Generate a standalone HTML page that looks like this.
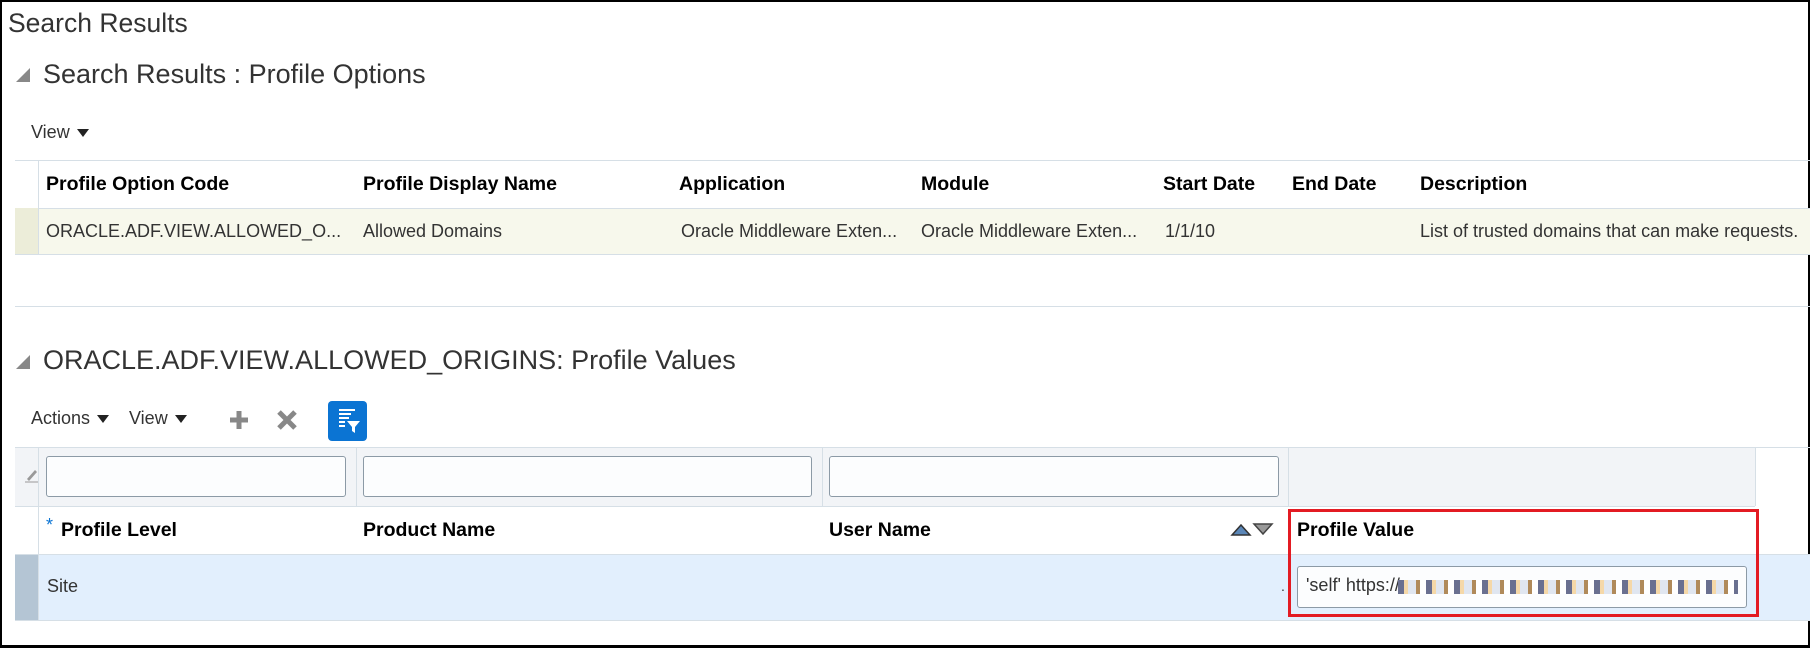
<!DOCTYPE html>
<html><head><style>
*{box-sizing:border-box;margin:0;padding:0}
body{width:1810px;height:648px;background:#fff;font-family:"Liberation Sans",Arial,sans-serif;color:#333;position:relative;overflow:hidden}
.frame{position:absolute;left:0;top:0;width:1810px;height:648px;border:2px solid #000;border-bottom-width:3px}
.a{position:absolute;white-space:nowrap}
.hl{position:absolute;height:1px;background:#d6dfe6}
.vl{position:absolute;width:1px;background:#d6dfe6}
.th{font-weight:bold;font-size:19.5px;color:#000}
.td{font-size:18px;color:#333}
.tri{width:0;height:0;border-left:14px solid transparent;border-bottom:14px solid #888;}
.inp{position:absolute;border:1px solid #8c9aa6;border-radius:3px;background:#fcfdfe}
.caret{display:inline-block;width:0;height:0;border-left:6px solid transparent;border-right:6px solid transparent;border-top:8px solid #222;margin-left:7px;vertical-align:middle}
</style></head><body>
<div class="frame"></div>
<div class="a" style="left:8px;top:8px;font-size:26.5px;color:#333">Search Results</div>
<div class="a tri" style="left:16px;top:68px"></div>
<div class="a" style="left:43px;top:59px;font-size:27px;color:#333">Search Results : Profile Options</div>
<div class="a" style="left:31px;top:122px;font-size:18px;color:#333">View<span class="caret"></span></div>

<div class="hl" style="left:15px;top:160px;width:1795px"></div>
<div class="a" style="left:15px;top:208px;width:1795px;height:46px;background:#f7f8ec"></div>
<div class="hl" style="left:15px;top:208px;width:1795px"></div>
<div class="hl" style="left:15px;top:254px;width:1795px"></div>
<div class="a" style="left:15px;top:208px;width:23px;height:46px;background:#ecedd9"></div>
<div class="vl" style="left:38px;top:160px;height:94px"></div>
<div class="a th" style="left:46px;top:173px">Profile Option Code</div>
<div class="a th" style="left:363px;top:173px">Profile Display Name</div>
<div class="a th" style="left:679px;top:173px">Application</div>
<div class="a th" style="left:921px;top:173px">Module</div>
<div class="a th" style="left:1163px;top:173px">Start Date</div>
<div class="a th" style="left:1292px;top:173px">End Date</div>
<div class="a th" style="left:1420px;top:173px">Description</div>
<div class="a td" style="left:46px;top:221px">ORACLE.ADF.VIEW.ALLOWED_O...</div>
<div class="a td" style="left:363px;top:221px">Allowed Domains</div>
<div class="a td" style="left:681px;top:221px">Oracle Middleware Exten...</div>
<div class="a td" style="left:921px;top:221px">Oracle Middleware Exten...</div>
<div class="a td" style="left:1165px;top:221px">1/1/10</div>
<div class="a td" style="left:1420px;top:221px">List of trusted domains that can make requests.</div>

<div class="hl" style="left:15px;top:306px;width:1795px"></div>
<div class="a tri" style="left:16px;top:355px"></div>
<div class="a" style="left:43px;top:345px;font-size:27px;color:#333">ORACLE.ADF.VIEW.ALLOWED_ORIGINS: Profile Values</div>

<div class="a" style="left:31px;top:408px;font-size:18px;color:#333">Actions<span class="caret"></span></div>
<div class="a" style="left:129px;top:408px;font-size:18px;color:#333">View<span class="caret"></span></div>
<svg class="a" style="left:228px;top:409px" width="22" height="22"><path d="M11 2v18M2 11h18" stroke="#888" stroke-width="5"/></svg>
<svg class="a" style="left:276px;top:409px" width="22" height="22"><path d="M3 3L19 19M19 3L3 19" stroke="#888" stroke-width="5"/></svg>
<div class="a" style="left:328px;top:401px;width:39px;height:40px;background:#0b74d3;border-radius:4px"></div>
<svg class="a" style="left:328px;top:401px" width="39" height="40"><path d="M11 9h16M11 13h12M11 17h10M11 21h6M11 25h6" stroke="#fff" stroke-width="2"/><path d="M19 20h13l-5 6v6l-3-2v-4z" fill="#fff"/></svg>

<div class="a" style="left:15px;top:447px;width:1740px;height:59px;background:#f2f4f7"></div>
<div class="hl" style="left:15px;top:447px;width:1795px"></div>
<div class="hl" style="left:15px;top:506px;width:1740px"></div>
<div class="vl" style="left:1755px;top:447px;height:59px"></div>
<div class="a" style="left:15px;top:554px;width:1795px;height:66px;background:#e2effd"></div>
<div class="a" style="left:15px;top:554px;width:23px;height:66px;background:#b4c5d4"></div>
<div class="hl" style="left:15px;top:554px;width:1795px"></div>
<div class="hl" style="left:15px;top:620px;width:1795px"></div>
<div class="vl" style="left:38px;top:447px;height:173px"></div>
<div class="vl" style="left:356px;top:447px;height:59px"></div>
<div class="vl" style="left:822px;top:447px;height:59px"></div>
<div class="vl" style="left:1288px;top:447px;height:59px"></div>
<svg class="a" style="left:24px;top:466px" width="14" height="18"><path d="M3 13L11 4l2 2-8 9z" fill="#999"/><path d="M1 16h13" stroke="#999"/></svg>
<div class="inp" style="left:46px;top:456px;width:300px;height:41px"></div>
<div class="inp" style="left:363px;top:456px;width:449px;height:41px"></div>
<div class="inp" style="left:829px;top:456px;width:450px;height:41px"></div>
<div class="a" style="left:46px;top:515px;font-size:18px;color:#0b74d3">*</div>
<div class="a th" style="left:61px;top:519px">Profile Level</div>
<div class="a th" style="left:363px;top:519px">Product Name</div>
<div class="a th" style="left:829px;top:519px">User Name</div>
<svg class="a" style="left:1230px;top:521px" width="46" height="16"><path d="M2 14L11 4l9 10z" fill="#5b87b8" stroke="#333" stroke-width="1.5"/><path d="M24 3h18l-9 10z" fill="#999" stroke="#444" stroke-width="1.5"/></svg>
<div class="a th" style="left:1297px;top:519px">Profile Value</div>
<div class="a td" style="left:47px;top:576px">Site</div>
<div class="a" style="left:1281px;top:578px;font-size:14px">.</div>
<div class="inp" style="left:1297px;top:566px;width:450px;height:42px"></div>
<div class="a td" style="left:1306px;top:575px">'self' https://</div>
<div class="a" style="left:1398px;top:580px;width:340px;height:14px;background:repeating-linear-gradient(90deg,#6a7090 0 6px,#f5d8a8 6px 10px,#e0e6f0 10px 18px,#b08a5a 18px 22px,#fff 22px 28px)"></div>
<div class="a" style="left:1288px;top:509px;width:471px;height:108px;border:3px solid #e31b23"></div>
</body></html>
